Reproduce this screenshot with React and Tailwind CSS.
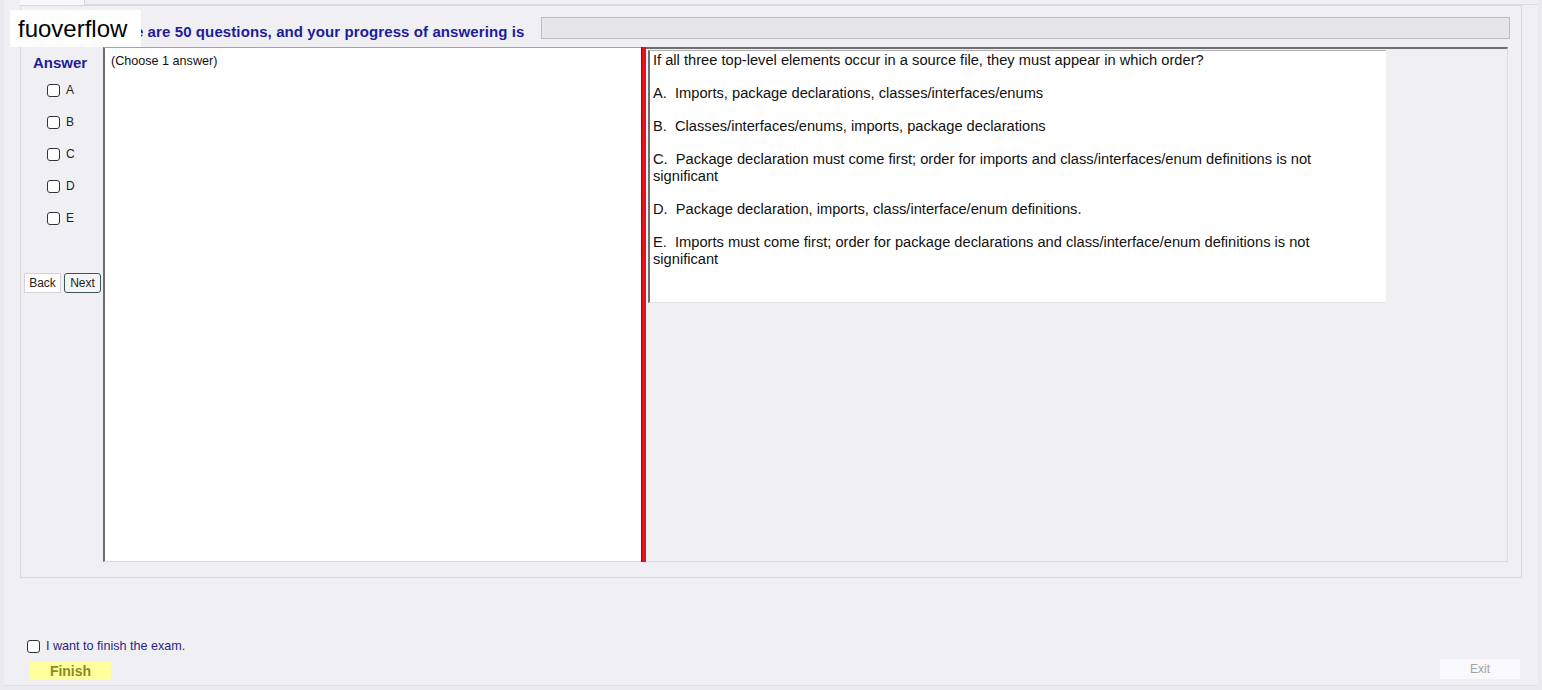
const letters = ["A", "B", "C", "D", "E"];

const question =
  "If all three top-level elements occur in a source file, they must appear in which order?";

const choices = [
  ["A.\u00a0 Imports, package declarations, classes/interfaces/enums"],
  ["B.\u00a0 Classes/interfaces/enums, imports, package declarations"],
  [
    "C.\u00a0 Package declaration must come first; order for imports and class/interfaces/enum definitions is not",
    "significant",
  ],
  ["D.\u00a0 Package declaration, imports, class/interface/enum definitions."],
  [
    "E.\u00a0 Imports must come first; order for package declarations and class/interface/enum definitions is not",
    "significant",
  ],
];

const Box = () => (
  <div className="w-[13px] h-[13px] shrink-0 rounded-[3px] border border-[#333] bg-white" />
);

const App = () => {
  return (
    <div className="relative w-[1542px] h-[690px] overflow-hidden bg-[#ebebef] font-['Liberation_Sans',Arial,sans-serif]">
      <div className="ml-[4px] mr-[4px] h-[686px] bg-[#f0f0f4] border-b border-[#e2e2e6] flex flex-col">
        {/* cut off tab strip */}
        <div className="h-[5px] flex">
          <div className="ml-[16px] w-[65px] bg-[#f7f7f9] border-r border-[#d6d6da]" />
          <div className="flex-1 border-b border-[#dcdce0]" />
        </div>

        {/* exam panel */}
        <div className="ml-[16px] w-[1502px] h-[573px] border border-[#d8d8dd] flex flex-col">
          <div className="h-[41px] flex items-start">
            <div className="w-[520px] pt-[17px] pl-[81px] text-[15px] tracking-[0.1px] leading-[18px] font-bold text-[#1c1c9c] whitespace-nowrap">
              There are 50 questions, and your progress of answering is
            </div>
            <div className="mt-[11px] w-[969px] h-[22px] bg-[#e6e6e8] border border-[#bdbdc0]" />
          </div>

          <div className="flex h-[515px]">
            {/* answer column */}
            <div className="w-[82px] flex flex-col">
              <div className="pt-[7px] pr-[4px] text-center text-[15px] leading-[17px] font-bold text-[#1c1c9c]">
                Answer
              </div>
              <div className="mt-[3px] flex flex-col">
                {letters.map((l) => (
                  <div key={l} className="h-[32px] pl-[26px] flex items-center gap-[6px]">
                    <Box />
                    <span className="text-[12px] text-[#222]">{l}</span>
                  </div>
                ))}
              </div>
              <div className="mt-[39px] pl-[3px] flex gap-[3px]">
                <button className="w-[37px] h-[20px] bg-white border border-[#d4d4d8] text-[12px] text-[#222]">
                  Back
                </button>
                <button className="w-[37px] h-[20px] bg-[#f5f5f7] border border-[#3d5555] rounded-[3px] text-[12px] text-[#222]">
                  Next
                </button>
              </div>
            </div>

            {/* answer area */}
            <div className="w-[538px] bg-white border-l-2 border-l-[#6d6d6d] border-t border-t-[#a4a4a8] border-b border-b-[#d8d8dc] pl-[6px] pt-[6px] text-[12.6px] leading-[15px] text-[#111]">
              (Choose 1 answer)
            </div>

            {/* splitter */}
            <div className="w-[5px] bg-[#e3121c] border-l border-[#a00010]" />

            {/* question area */}
            <div className="w-[862px] bg-[#f0f0f2] border-t-2 border-t-[#707070] border-r border-r-[#dcdce0] border-b border-b-[#dcdce0] pl-[2px]">
              <div className="mt-[1px] w-[738px] h-[253px] bg-white border-l-2 border-l-[#707070] border-t border-t-[#b0b0b4] border-b border-b-[#e4e4e8] pl-[3px] pt-[1px] text-[14.67px] leading-[17px] text-[#111]">
                <p>{question}</p>
                {choices.map((c) => (
                  <p key={c[0]} className="mt-[16px]">
                    {c[0]}
                    {c[1] && (
                      <>
                        <br />
                        {c[1]}
                      </>
                    )}
                  </p>
                ))}
              </div>
            </div>
          </div>
        </div>

        {/* finish area */}
        <div className="flex-1 flex justify-between items-end">
          <div className="pl-[23px] pb-[5px] flex flex-col">
            <div className="h-[13px] flex items-center gap-[6px]">
              <Box />
              <span className="text-[12.6px] text-[#2a1f86]">I want to finish the exam.</span>
            </div>
            <div className="mt-[9px] ml-[3px] w-[81px] h-[18px] bg-[#ffff9e] flex items-center justify-center text-[14px] font-bold text-[#8a8a26]">
              Finish
            </div>
          </div>
          <div className="mr-[18px] mb-[6px] w-[80px] h-[20px] bg-[#f9f8fc] flex items-center justify-center text-[12px] text-[#a2a2a6]">
            Exit
          </div>
        </div>
      </div>

      {/* watermark */}
      <div className="absolute left-[10px] top-[10px] w-[131px] h-[37px] bg-white pl-[8px] flex items-center text-[24px] text-black">
        fuoverflow
      </div>
    </div>
  );
};

export default App;
